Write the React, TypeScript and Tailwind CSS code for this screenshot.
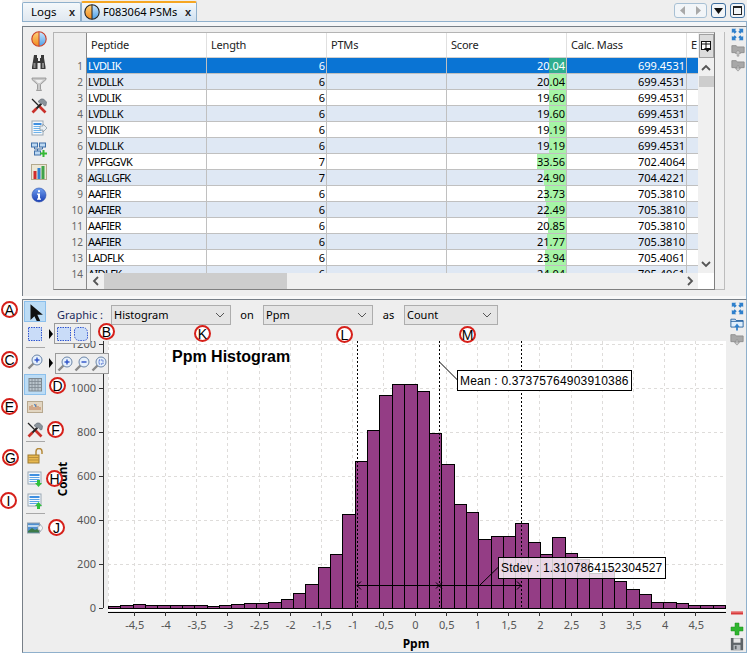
import React from "react";

const UI = "font-['Noto_Sans',sans-serif]";

type Row = [string, number, number, string];
const rows: Row[] = [
  ["LVDLIK", 6, 20.04, "699.4531"],
  ["LVDLLK", 6, 20.04, "699.4531"],
  ["LVDLIK", 6, 19.6, "699.4531"],
  ["LVDLLK", 6, 19.6, "699.4531"],
  ["VLDIIK", 6, 19.19, "699.4531"],
  ["VLDLLK", 6, 19.19, "699.4531"],
  ["VPFGGVK", 7, 33.56, "702.4064"],
  ["AGLLGFK", 7, 24.9, "704.4221"],
  ["AAFIER", 6, 23.73, "705.3810"],
  ["AAFIER", 6, 22.49, "705.3810"],
  ["AAFIER", 6, 20.85, "705.3810"],
  ["AAFIER", 6, 21.77, "705.3810"],
  ["LADFLK", 6, 23.94, "705.4061"],
  ["AIDLFK", 6, 24.04, "705.4061"],
];

const tops = [606,605,604,605,605,605,605,605,606,605,604,603,603,602,599,593,584,567,554,514,461,430,395,384,384,391,433,464,504,512,539,536,536,523,542,554,537,553,559,573,569,581,589,594,602,602,603,605,605,605];

const Box = ({ children, size = 16 }: { children: React.ReactNode; size?: number }) => (
  <svg width={size} height={size} viewBox="0 0 16 16" className="block shrink-0">{children}</svg>
);

const Split = ({ size = 16, id }: { size?: number; id: string }) => (
  <Box size={size}>
    <defs>
      <linearGradient id={id + "o"} x1="0" y1="0" x2="0" y2="1"><stop offset="0" stopColor="#ffd27a" /><stop offset="1" stopColor="#f08a1e" /></linearGradient>
      <linearGradient id={id + "b"} x1="0" y1="0" x2="0" y2="1"><stop offset="0" stopColor="#cfe6fb" /><stop offset="1" stopColor="#4a9fe8" /></linearGradient>
    </defs>
    <path d="M8 .8A7.2 7.2 0 0 0 8 15.2Z" fill={`url(#${id}o)`} />
    <path d="M8 .8A7.2 7.2 0 0 1 8 15.2Z" fill={`url(#${id}b)`} />
    <circle cx="8" cy="8" r="7.2" fill="none" stroke={id === "a" ? "#c8402a" : "#222"} strokeWidth="1.1" />
    <path d="M8 .8V15.2" stroke={id === "a" ? "#c8402a" : "#222"} strokeWidth="1" />
  </Box>
);
const Binoculars = () => (
  <Box>
    <path d="M3 1h3v3h1v3h2V4h1V1h3v3l1.500 9v2H9.500V9h-3v6H1v-2L2.500 4z" fill="#3a3a3a" />
    <path d="M2.500 9h2v5h-2zM11 9h2v5h-2z" fill="#8a8a8a" />
  </Box>
);
const Funnel = () => (
  <Box>
    <path d="M1 2h14v1.500L9.500 8.500V13l1 1.500h-5L6.500 13V8.500L1 3.500z" fill="#c9c9c9" stroke="#8d8d8d" strokeWidth=".8" />
    <path d="M4 4h8l-3 3H7z" fill="#eee" />
  </Box>
);
const Tools = () => (
  <Box>
    <path d="M1 1l7 7" stroke="#222" strokeWidth="1.300" />
    <path d="M7.500 7.500l7 7" stroke="#c9302a" strokeWidth="2.600" />
    <path d="M10.500 5.500L5 11" stroke="#222" strokeWidth="2" />
    <path d="M5.500 10.500L1.500 14.500" stroke="#c9302a" strokeWidth="2.600" />
    <path d="M7 3.500L10 1h2.500L15.500 4 15 7.500 13.500 8 11.500 5.500 10 6z" fill="#8b949c" stroke="#5f676e" strokeWidth=".6" />
  </Box>
);
const TableExport = () => (
  <Box>
    <rect x="1" y="1" width="11" height="14" fill="#f4f8fc" stroke="#9aa8b4" />
    <path d="M2.500 3h8v2h-8z" fill="#3f8fe0" />
    <path d="M2.500 6.500h8M2.500 8.500h8M2.500 10.500h8M2.500 12.500h8" stroke="#6fb3ea" />
    <path d="M9 6h3V4l4 4-4 4v-2H9z" fill="#e8eef2" stroke="#8f9ca6" strokeWidth=".8" />
  </Box>
);
const TreeAdd = () => (
  <Box>
    <rect x="0.500" y="1" width="6" height="4" fill="#bcd8f2" stroke="#3e6fa8" />
    <rect x="8.500" y="1" width="6" height="4" fill="#bcd8f2" stroke="#3e6fa8" />
    <rect x="3.500" y="9" width="6" height="4" fill="#bcd8f2" stroke="#3e6fa8" />
    <path d="M3.500 5v2h8V5M6.500 7v2" stroke="#3e6fa8" fill="none" />
    <path d="M11.500 8h2v2.500H16v2h-2.500V15h-2v-2.500H9v-2h2.500z" fill="#35b935" />
  </Box>
);
const ChartIcon = () => (
  <Box>
    <rect x=".5" y=".5" width="15" height="15" fill="#ece7d5" stroke="#b3a98d" />
    <rect x="2.500" y="7" width="3" height="8" fill="#d02b2b" />
    <rect x="6.500" y="4" width="3" height="11" fill="#2f7fd0" />
    <rect x="10.500" y="2" width="3" height="13" fill="#3fa34a" />
  </Box>
);
const Info = () => (
  <Box>
    <defs><linearGradient id="inf" x1="0" y1="0" x2="0" y2="1"><stop offset="0" stopColor="#6f9ff0" /><stop offset="1" stopColor="#1a3eb4" /></linearGradient></defs>
    <circle cx="8" cy="8" r="7" fill="url(#inf)" stroke="#2a4ea8" strokeWidth=".6" />
    <rect x="7" y="3.200" width="2" height="2" fill="#fff" />
    <path d="M6 6.500h3v5h1v1.300H6v-1.300h1V7.800H6z" fill="#fff" />
  </Box>
);
const Expand = () => (
  <Box size={13}>
    <g fill="#2f80cc">
      <path d="M1 1h5.500L5 2.500l2 2L4.500 7l-2-2L1 6.500z" />
      <path d="M15 1H9.500L11 2.500l-2 2L11.500 7l2-2L15 6.500z" />
      <path d="M1 15h5.500L5 13.500l2-2L4.500 9l-2 2L1 9.500z" />
      <path d="M15 15H9.500l1.500-1.500-2-2L11.500 9l2 2L15 9.500z" />
    </g>
  </Box>
);
const FolderUp = ({ down, active }: { down?: boolean; active?: boolean }) => (
  <Box size={14}>
    {active ? (
      <>
        <path d="M1 2.500h5l1 1.500h8v7.500H1z" fill="#dfeefb" stroke="#1f5f9f" />
        <path d="M1 5h14" stroke="#1f5f9f" />
        <path d="M7 15.500v-4H5l3-4 3 4H9v4z" fill="#2f80cc" />
      </>
    ) : (
      <>
        <path d="M1 3h5l1 1.500h8V11H1z" fill="#a8a8a8" stroke="#8e8e8e" />
        {down ? (
          <path d="M7 9h2v3h2l-3 3-3-3h2z" fill="#c9c9c9" stroke="#8e8e8e" strokeWidth=".7" />
        ) : (
          <path d="M7 15v-3H5l3-4 3 4H9v3z" fill="#c9c9c9" stroke="#8e8e8e" strokeWidth=".7" />
        )}
      </>
    )}
  </Box>
);
const Arrow = () => (
  <Box size={18}>
    <path d="M4 1l0 14 3.500-3.300L10 17l2.600-1.300-2.500-5.200H15z" fill="#111" />
  </Box>
);
const Dashed = ({ round }: { round?: boolean }) => (
  <Box>
    {round ? (
      <path d="M1.500 5Q1.500 1.500 5 1.500H10Q14.500 2 14.500 7V12Q14 14.500 10 14.500H6Q1.500 14 1.500 9z" fill="#c9dcf8" stroke="#2f55d0" strokeDasharray="1.500 1" />
    ) : (
      <rect x="1.500" y="1.500" width="13" height="13" fill="#c9dcf8" stroke="#2f55d0" strokeDasharray="1.500 1" />
    )}
  </Box>
);
const Zoom = ({ kind }: { kind: "plus" | "minus" | "fit" }) => (
  <Box>
    <path d="M6.500 9.500L1.500 14.500" stroke="#8a8a8a" strokeWidth="2.400" />
    <circle cx="10" cy="6" r="5" fill="#e6f0fb" stroke="#6b85a8" />
    {kind !== "fit" && <path d="M7.500 6h5" stroke="#2a50c8" strokeWidth="1.400" />}
    {kind === "plus" && <path d="M10 3.500v5" stroke="#2a50c8" strokeWidth="1.400" />}
    {kind === "fit" && <rect x="8" y="4" width="4" height="4" fill="none" stroke="#2a50c8" strokeDasharray="1 .8" />}
  </Box>
);
const GridIcon = () => (
  <Box>
    <rect x="2" y="1.500" width="12.500" height="12.500" fill="#b9c4cc" stroke="#7d8890" />
    <path d="M5 1.500v12.500M8 1.500v12.500M11 1.500v12.500M2 4.500h12.500M2 7.500h12.500M2 10.500h12.500" stroke="#7d8890" strokeWidth=".8" />
  </Box>
);
const Spectrum = () => (
  <Box>
    <rect x=".5" y="2.500" width="15" height="11" fill="#e2d6c2" stroke="#b7a88f" />
    <path d="M3 11V7M5 11V6M7 11V8M9 11V5M11 11V7M13 11V8" stroke="#c07a50" strokeWidth="1" />
    <path d="M7 6Q8 4 9 8" stroke="#3c7fc8" fill="none" />
  </Box>
);
const Lock = () => (
  <Box>
    <path d="M9 7V3.500a3 3 0 0 1 6 0V6" fill="none" stroke="#b58a3a" strokeWidth="1.500" />
    <rect x="1" y="7" width="11" height="8" fill="#e8b84f" stroke="#9d7a30" />
    <path d="M1 9.500h11M1 12h11" stroke="#b88f3d" />
  </Box>
);
const TableArrow = ({ up }: { up?: boolean }) => (
  <Box>
    <rect x="1" y="1" width="13" height="12" fill="#f4f8fc" stroke="#9aa8b4" />
    <path d="M2.500 3h10v2h-10z" fill="#3f8fe0" />
    <path d="M2.500 6.500h10M2.500 8.500h10M2.500 10.500h10" stroke="#5aa3e6" />
    {up ? <path d="M10 16v-3H8l3.500-4L15 13h-2v3z" fill="#2fc03a" /> : <path d="M10 9v3H8l3.500 4L15 12h-2V9z" fill="#2fc03a" />}
  </Box>
);
const ImageExport = () => (
  <Box>
    <rect x=".5" y="3" width="12" height="10" fill="#4f8fd0" stroke="#8fa0ae" />
    <path d="M1 11l4-3 3 2 4-2v4.500H1z" fill="#3d7a48" />
    <path d="M1 5h11v2H1z" fill="#bcd8f0" />
    <path d="M11 6h2V4l3 4-3 4v-2h-2z" fill="#f2f4f6" stroke="#98a4ae" strokeWidth=".7" />
  </Box>
);
const Save = () => (
  <Box size={14}>
    <path d="M1 1h13l1 1v13H1z" fill="#5e6468" />
    <rect x="4" y="1.500" width="8" height="5" fill="#e8e8e8" />
    <rect x="4" y="9" width="8" height="6" fill="#b8bcc0" />
    <rect x="5.500" y="10" width="2" height="4" fill="#5e6468" />
  </Box>
);
const Minus = () => (
  <Box><rect x="2" y="6.500" width="12" height="3" fill="#d83a3a" /><rect x="2" y="6.500" width="12" height="1" fill="#f08a8a" /></Box>
);
const Plus = () => (
  <Box><path d="M6 2h4v4h4v4h-4v4H6v-4H2V6h4z" fill="#2fb52f" stroke="#1f8f1f" strokeWidth=".5" /></Box>
);

const Chevron = () => (
  <svg width="10" height="6" viewBox="0 0 10 6" className="block"><path d="M1 1l4 4 4-4" fill="none" stroke="#555" strokeWidth="1" /></svg>
);

const Combo = ({ label, w }: { label: string; w: string }) => (
  <div className={`${w} h-[20px] bg-[#e5e5e5] border border-[#adadad] flex items-center justify-between pl-[2px] pr-[5px] text-[11px] text-black`}>
    <span>{label}</span>
    <Chevron />
  </div>
);

const Marker = ({ c, cls }: { c: string; cls: string }) => (
  <div className={`absolute ${cls} w-[17px] h-[17px] rounded-full border-2 border-[#d6201a] bg-white flex items-center justify-center text-[14px] leading-none text-black font-['Liberation_Sans',sans-serif]`}>{c}</div>
);

const TabClose = () => <span className="text-[11px] font-bold leading-none text-[#222] font-['Liberation_Sans',sans-serif]">x</span>;

const Table = () => {
  const hd = ["Peptide", "Length", "PTMs", "Score", "Calc. Mass", "E"];
  return (
    <div className="flex-1 min-w-0 flex flex-col overflow-hidden border-l border-[#8a8a8a]">
      <div className="flex h-[25px] bg-white shrink-0 border-b border-[#d0d0d0]">
        {hd.map((h) => (
          <div key={h} className="w-[120px] shrink-0 pl-[4px] flex items-center border-r border-[#e0e0e0] text-[#222] text-[11px] tracking-[-0.2px]">{h}</div>
        ))}
      </div>
      <div className="flex-1 overflow-hidden">
        {rows.map((r, i) => {
          const sel = i === 0;
          const bg = sel ? "bg-[#0a74d4] text-white" : i % 2 ? "bg-[#dfe8f4] text-black" : "bg-white text-black";
          return (
            <div key={i} className={`flex h-[16px] ${bg} border-b border-[#c0c0c0] text-[11px] leading-[15px]`}>
              <div className="w-[120px] shrink-0 pl-[1px] border-r border-[#c0c0c0] tracking-[-0.6px]">{r[0]}</div>
              <div className="w-[120px] shrink-0 pr-[1px] text-right border-r border-[#c0c0c0]">{r[1]}</div>
              <div className="w-[120px] shrink-0 border-r border-[#c0c0c0]" />
              <div className="w-[120px] shrink-0 border-r border-[#c0c0c0] relative text-right pr-[1px]">
                <div className={`absolute right-0 top-0 bottom-0 ${sel ? "bg-[#2eae8e]" : "bg-[#a6f4a6]"}`} style={{ width: Math.round(r[2] * 0.87) }} />
                <span className="relative">{r[2].toFixed(2)}</span>
              </div>
              <div className="w-[120px] shrink-0 pr-[1px] text-right border-r border-[#c0c0c0]">{r[3]}</div>
              <div className="w-[120px] shrink-0" />
            </div>
          );
        })}
      </div>
      <div className="h-[16px] shrink-0 bg-[#f0f0f0] flex items-center">
        <div className="w-[17px] flex justify-center"><svg width="8" height="10" viewBox="0 0 8 10"><path d="M6 1L2 5l4 4" fill="none" stroke="#555" strokeWidth="1.800" /></svg></div>
        <div className="w-[183px] h-[16px] bg-[#cdcdcd]" />
        <div className="flex-1" />
        <div className="w-[17px] flex justify-center"><svg width="8" height="10" viewBox="0 0 8 10"><path d="M2 1l4 4-4 4" fill="none" stroke="#555" strokeWidth="1.800" /></svg></div>
      </div>
    </div>
  );
};

const xTicks = [-4.5,-4,-3.5,-3,-2.5,-2,-1.5,-1,-0.5,0,0.5,1,1.5,2,2.5,3,3.5,4,4.5];
const X = (v: number) => 415.5 + v * 62.4;
const Y = (c: number) => 607.5 - (c / 200) * 44;

const Chart = () => (
  <svg width="672" height="311" viewBox="54 341 672 311" className="block font-['Noto_Sans',sans-serif]">
    <rect x="108" y="341" width="618" height="270" fill="#fff" />
    <g stroke="#dedcda" strokeDasharray="3 3" fill="none">
      {xTicks.map((v) => <path key={v} d={`M${Math.round(X(v)) - 0.5} 341V607`} />)}
      <path d="M108.500 341V607" />
      {[200,400,600,800,1000,1200].map((c) => <path key={c} d={`M108 ${Math.round(Y(c)) + 0.5}H726`} />)}
    </g>
    <text x="172" y="362" fontFamily="Liberation Sans" fontWeight="700" fontSize="16" fill="#000">Ppm Histogram</text>
    {tops.map((t, i) => {
      const x0 = Math.round(108 + i * 12.34);
      const x1 = Math.round(108 + (i + 1) * 12.34);
      return <rect key={i} x={x0 + 0.5} y={t + 0.5} width={x1 - x0} height={608 - t} fill="#943d85" stroke="#000" strokeWidth="1" />;
    })}
    <g stroke="#000" fill="none">
      <path d="M357.500 341V607M439.500 341V607M521.500 341V607" strokeDasharray="2 2" />
      <path d="M357 585.500H521" />
      <path d="M361 581.500L357 585.500L361 589.500M517 581.500L521 585.500L517 589.500M436 582.500L442 588.500M442 582.500L436 588.500" />
      <path d="M439.500 362L457.500 380M480 585L498.500 567" />
    </g>
    <path d="M103.500 341V608" stroke="#333" fill="none" />
    {[0,200,400,600,800,1000,1200].map((c) => (
      <g key={c}>
        <path d={`M99 ${Math.round(Y(c)) + 0.5}H103`} stroke="#333" />
        <text x="96" y={Y(c) + 4} textAnchor="end" fontSize="11" fill="#555">{c}</text>
      </g>
    ))}
    <path d="M108 612.500H726" stroke="#000" />
    {xTicks.map((v) => (
      <g key={v}>
        <path d={`M${Math.round(X(v)) - 0.5} 612V616`} stroke="#333" />
        <text x={X(v)} y="629" textAnchor="middle" fontSize="11" fill="#555">{String(v).replace(".", ",")}</text>
      </g>
    ))}
    <text x="416" y="648" textAnchor="middle" fontSize="12" fontWeight="700" fill="#000">Ppm</text>
    <text transform="translate(67 479) rotate(-90)" textAnchor="middle" fontSize="11.500" fontWeight="700" fill="#000">Count</text>
  </svg>
);

const ToolCell = ({ children, sel, cls = "" }: { children: React.ReactNode; sel?: boolean; cls?: string }) => (
  <div className={`w-[22px] h-[21px] ml-[1px] flex items-center justify-center ${sel ? "bg-[#bcdcf5] border border-[#8cc0ec]" : ""} ${cls}`}>{children}</div>
);
const Sep = ({ cls }: { cls: string }) => <div className={`w-[19px] ml-[3px] h-px bg-[#a8a8a8] ${cls}`} />;
const Slot = ({ children }: { children: React.ReactNode }) => <div className="h-[15px] w-[14px] flex items-center justify-center">{children}</div>;

export default function App() {
  return (
    <div className={`relative w-[750px] h-[657px] overflow-hidden bg-white pl-[22px] pr-[3px] flex flex-col text-[11px] text-black ${UI}`}>
      {/* tab bar */}
      <div className="h-[21px] shrink-0 bg-[#eeeeee] flex items-end pr-[2px]">
        <div className="w-[59px] h-[19px] border border-b-0 border-[#8fb0cc] rounded-t-[2px] bg-gradient-to-b from-[#f4f8fb] to-[#e0e8f0] flex items-center justify-between pl-[8px] pr-[5px] text-[11.500px] whitespace-nowrap">
          <span>Logs</span><TabClose />
        </div>
        <div className="w-[116px] h-[20px] border border-b-0 border-[#8fb0cc] border-t-2 border-t-[#f5a623] rounded-t-[2px] bg-gradient-to-b from-[#f4f8fb] to-[#cfe0f0] flex items-center pl-[2px] pr-[5px] gap-[3px] text-[11px] whitespace-nowrap">
          <Split id="t" />
          <span className="flex-1">F083064 PSMs</span><TabClose />
        </div>
        <div className="flex-1" />
        <div className="flex gap-[4px] items-center self-start mt-[3px]">
          <div className="w-[33px] h-[15px] border border-[#a8c0d4] rounded-[3px] bg-[#f2f5f8] flex items-center justify-around">
            <svg width="6" height="9" viewBox="0 0 6 9"><path d="M5 0v9L0 4.500z" fill="#a9a9a9" /></svg>
            <svg width="6" height="9" viewBox="0 0 6 9"><path d="M1 0v9l5-4.500z" fill="#a9a9a9" /></svg>
          </div>
          <div className="w-[15px] h-[15px] border border-[#3f6f9f] rounded-[3px] bg-[#f2f5f8] flex items-center justify-center">
            <svg width="9" height="6" viewBox="0 0 9 6"><path d="M0 0h9L4.500 6z" fill="#111" /></svg>
          </div>
          <div className="w-[15px] h-[15px] border border-[#3f6f9f] rounded-[3px] bg-[#f2f5f8] flex items-center justify-center">
            <div className="w-[9px] h-[9px] border border-[#222] border-t-2" />
          </div>
        </div>
      </div>
      {/* tab underline */}
      <div className="h-[5px] shrink-0 bg-[#f4f6f8] border-t border-r border-[#8fb0cc]" />

      {/* top panel */}
      <div className="h-[270px] shrink-0 bg-[#eeeeee] border-t border-l border-r border-t-[#777f87] border-l-[#777f87] border-r-[#8fb0cc] flex">
        <div className="w-[30px] shrink-0 flex flex-col items-center pl-[1px] pt-[4px] gap-[6px]">
          <div className="mb-[1px]"><Split id="a" /></div>
          <Binoculars /><Funnel /><Tools /><TableExport /><TreeAdd /><ChartIcon />
          <div className="mt-[1px]"><Info /></div>
        </div>
        <div className="w-[662px] h-[258px] mt-[5px] shrink-0 border border-[#b4b4b4] border-r-[#808080] border-b-[#808080] flex">
          <div className="w-[32px] shrink-0 bg-[#eeeeee] flex flex-col pt-[25px] overflow-hidden">
            {rows.map((_, i) => (
              <div key={i} className="h-[16px] shrink-0 text-right pr-[3px] text-[10px] leading-[16px] text-[#666]">{i + 1}</div>
            ))}
          </div>
          <Table />
          <div className="w-[16px] shrink-0 bg-[#f0f0f0] flex flex-col items-center">
            <div className="w-[15px] h-[24px] mt-[1px] border border-[#a0a0a0] bg-[#dcdcdc] flex items-center justify-center">
              <svg width="11" height="11" viewBox="0 0 11 11"><rect x=".5" y=".5" width="9" height="8" fill="#fff" stroke="#111" /><path d="M.5 3h9M5 .5V8" stroke="#111" /><path d="M3 7h7l-3.500 4z" fill="#111" /></svg>
            </div>
            <svg width="10" height="8" viewBox="0 0 10 8" className="mt-[6px]"><path d="M1 6l4-4 4 4" fill="none" stroke="#555" strokeWidth="1.800" /></svg>
            <div className="w-[15px] h-[11px] mt-[4px] bg-[#cdcdcd]" />
            <div className="flex-1" />
            <svg width="10" height="8" viewBox="0 0 10 8" className="mb-[5px]"><path d="M1 2l4 4 4-4" fill="none" stroke="#555" strokeWidth="1.800" /></svg>
            <div className="w-[16px] h-[16px] bg-white" />
          </div>
        </div>
        <div className="w-[10px] h-[258px] mt-[5px] shrink-0 bg-[#f0f0f0] border-r border-b border-[#bdbdbd]" />
        <div className="flex-1 flex flex-col items-center pl-[4px]">
          <Slot><Expand /></Slot><Slot><FolderUp /></Slot><Slot><FolderUp down /></Slot>
        </div>
      </div>
      {/* splitter */}
      <div className="h-[3px] shrink-0 bg-[#f8f8f8] border-r border-[#8fb0cc]" />

      {/* bottom panel */}
      <div className="h-[354px] shrink-0 bg-[#eeeeee] border-t border-l border-b border-r border-t-[#777f87] border-l-[#777f87] border-b-[#8fb0cc] border-r-[#8fb0cc] flex">
        <div className="w-[31px] shrink-0 flex flex-col pt-[1px]">
          <ToolCell sel><Arrow /></ToolCell>
          <ToolCell cls="mt-[1px]"><Dashed /></ToolCell>
          <Sep cls="mt-[3px]" />
          <ToolCell cls="mt-[3px]"><Zoom kind="plus" /></ToolCell>
          <ToolCell sel cls="mt-[2px]"><GridIcon /></ToolCell>
          <ToolCell cls="mt-[1px]"><Spectrum /></ToolCell>
          <ToolCell cls="mt-[2px]"><Tools /></ToolCell>
          <Sep cls="mt-[1px]" />
          <ToolCell cls="mt-[3px]"><Lock /></ToolCell>
          <ToolCell cls="mt-[2px]"><TableArrow /></ToolCell>
          <ToolCell cls="mt-[1px]"><TableArrow up /></ToolCell>
          <Sep cls="mt-[2px]" />
          <ToolCell cls="mt-[3px]"><ImageExport /></ToolCell>
        </div>
        <div className="w-[672px] shrink-0 flex flex-col">
          <div className="h-[41px] shrink-0 flex items-start pt-[5px] pl-[3px] text-[11px]">
            <span className="w-[54px] leading-[20px] text-[#1a2a5a]">Graphic :</span>
            <Combo label="Histogram" w="w-[120px]" />
            <span className="w-[32px] text-center leading-[20px]">on</span>
            <Combo label="Ppm" w="w-[110px]" />
            <span className="w-[31px] text-center leading-[20px]">as</span>
            <Combo label="Count" w="w-[94px]" />
          </div>
          <Chart />
        </div>
        <div className="flex-1 flex flex-col items-center pl-[2px] pt-[1px]">
          <Slot><Expand /></Slot><Slot><FolderUp active /></Slot><Slot><FolderUp down /></Slot>
          <div className="flex-1" />
          <Minus /><Plus /><Save />
          <div className="h-[1px]" />
        </div>
      </div>

      {/* overlays: popups */}
      <div className="absolute left-[49px] top-[329px] w-0 h-0 border-y-[5px] border-y-transparent border-l-[4px] border-l-black" />
      <div className="absolute left-[54px] top-[323px] w-[37px] h-[21px] border border-[#9a9a9a] bg-[#eeeeee] flex items-center justify-center gap-[1px]">
        <Dashed /><Dashed round />
      </div>
      <div className="absolute left-[49px] top-[358px] w-0 h-0 border-y-[5px] border-y-transparent border-l-[4px] border-l-black" />
      <div className="absolute left-[55px] top-[353px] w-[54px] h-[21px] border border-[#9a9a9a] bg-[#eeeeee] flex items-center justify-center gap-[1px]">
        <Zoom kind="plus" /><Zoom kind="minus" /><Zoom kind="fit" />
      </div>

      {/* overlays: annotations */}
      <div className="absolute left-[457px] top-[370px] w-[175px] h-[21px] border border-black bg-white flex items-center pl-[2px] text-[12px] tracking-[0.2px] whitespace-nowrap font-['Liberation_Sans',sans-serif]">Mean : 0.37375764903910386</div>
      <div className="absolute left-[498px] top-[557px] w-[168px] h-[22px] border border-black bg-white/80 flex items-center pl-[2px] text-[12px] tracking-[0.15px] whitespace-nowrap font-['Liberation_Sans',sans-serif]">Stdev : 1.3107864152304527</div>

      {/* overlays: markers */}
      <Marker c="A" cls="left-[1px] top-[301px]" />
      <Marker c="B" cls="left-[98px] top-[323px]" />
      <Marker c="C" cls="left-[1px] top-[351px]" />
      <Marker c="D" cls="left-[49px] top-[377px]" />
      <Marker c="E" cls="left-[1px] top-[398px]" />
      <Marker c="F" cls="left-[47px] top-[421px]" />
      <Marker c="G" cls="left-[2px] top-[449px]" />
      <Marker c="H" cls="left-[46px] top-[470px]" />
      <Marker c="I" cls="left-[0px] top-[492px]" />
      <Marker c="J" cls="left-[48px] top-[519px]" />
      <Marker c="K" cls="left-[194px] top-[325px]" />
      <Marker c="L" cls="left-[336px] top-[326px]" />
      <Marker c="M" cls="left-[459px] top-[326px]" />
    </div>
  );
}
